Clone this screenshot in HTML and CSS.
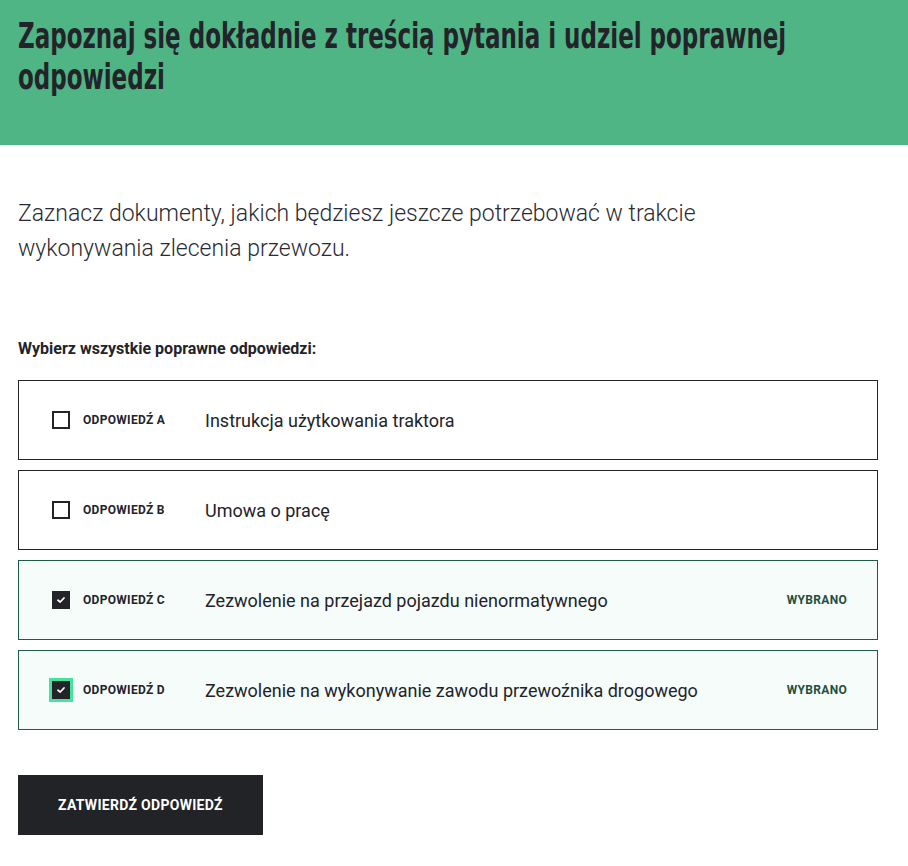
FILE: index.html
```html
<!DOCTYPE html>
<html lang="pl">
<head>
    <meta charset="UTF-8">
    <meta name="viewport" content="width=device-width, initial-scale=1.0">
    <title>Pytanie</title>
    <link rel="stylesheet" href="styles.css">
</head>
<body>
    <header class="question-header">
        <h1>Zapoznaj się dokładnie z treścią pytania i udziel poprawnej odpowiedzi</h1>
    </header>

    <main class="question-body">
        <p class="question-text">Zaznacz dokumenty, jakich będziesz jeszcze potrzebować w trakcie wykonywania zlecenia przewozu.</p>

        <div class="answers-label">Wybierz wszystkie poprawne odpowiedzi:</div>

        <div class="answers">
            <label class="answer">
                <span class="checkbox"></span>
                <span class="answer-key">Odpowiedź A</span>
                <span class="answer-text">Instrukcja użytkowania traktora</span>
            </label>
            <label class="answer">
                <span class="checkbox"></span>
                <span class="answer-key">Odpowiedź B</span>
                <span class="answer-text">Umowa o pracę</span>
            </label>
            <label class="answer selected">
                <span class="checkbox">
                    <svg width="10" height="8" viewBox="0 0 10 8"><path d="M2 4.2 L4.2 6 L8 2" fill="none" stroke="#fff" stroke-width="1.8" stroke-linecap="round" stroke-linejoin="round"/></svg>
                </span>
                <span class="answer-key">Odpowiedź C</span>
                <span class="answer-text">Zezwolenie na przejazd pojazdu nienormatywnego</span>
                <span class="answer-status">Wybrano</span>
            </label>
            <label class="answer selected">
                <span class="checkbox focused">
                    <svg width="10" height="8" viewBox="0 0 10 8"><path d="M2 4.2 L4.2 6 L8 2" fill="none" stroke="#fff" stroke-width="1.8" stroke-linecap="round" stroke-linejoin="round"/></svg>
                </span>
                <span class="answer-key">Odpowiedź D</span>
                <span class="answer-text">Zezwolenie na wykonywanie zawodu przewoźnika drogowego</span>
                <span class="answer-status">Wybrano</span>
            </label>
        </div>

        <button class="submit-btn">Zatwierdź odpowiedź</button>
    </main>
</body>
</html>
```

FILE: styles.css
```css
* {
    margin: 0;
    padding: 0;
    box-sizing: border-box;
}

body {
    font-family: Roboto, "Liberation Sans", sans-serif;
    color: #23232a;
    background: #fff;
}

.question-header {
    background: #50b584;
    height: 145px;
    padding: 16px 0 0 18px;
    overflow: hidden;
}

/* no condensed display face offline, so squeeze DejaVu Condensed */
.question-header h1 {
    font-family: "DejaVu Sans Condensed", "DejaVu Sans", sans-serif;
    font-weight: bold;
    font-size: 35px;
    line-height: 41px;
    color: #23232a;
    width: 1170px;
    transform: scaleX(0.73);
    transform-origin: left top;
}

.question-body {
    padding: 51px 30px 40px 18px;
}

.question-text {
    font-weight: 300;
    font-size: 23px;
    line-height: 35px;
    max-width: 720px;
    color: #2a2a32;
}

.answers-label {
    margin-top: 73px;
    font-weight: bold;
    font-size: 16px;
    line-height: 20px;
    margin-bottom: 21px;
}

.answers {
    display: flex;
    flex-direction: column;
    gap: 10px;
}

.answer {
    display: flex;
    align-items: center;
    height: 80px;
    padding: 0 30px 0 33px;
    border: 1px solid #23232a;
    cursor: pointer;
}

.answer.selected {
    border-color: #1f5c47;
    background: #f5fcf9;
}

.checkbox {
    width: 18px;
    height: 18px;
    border: 2px solid #23232a;
    display: flex;
    align-items: center;
    justify-content: center;
    flex-shrink: 0;
}

.selected .checkbox {
    background: #23232a;
}

.checkbox.focused {
    outline: 3px solid #45e39e;
}

.answer-key {
    width: 122px;
    margin-left: 13px;
    font-weight: bold;
    font-size: 12px;
    letter-spacing: 0.3px;
    text-transform: uppercase;
    flex-shrink: 0;
}

.answer-text {
    flex: 1;
    font-size: 18px;
}

.answer-status {
    font-weight: bold;
    font-size: 12px;
    letter-spacing: 0.3px;
    text-transform: uppercase;
    color: #1f4f3e;
}

.submit-btn {
    margin-top: 45px;
    height: 60px;
    padding: 0 40px;
    background: #222327;
    color: #fff;
    border: none;
    font-family: Roboto, "Liberation Sans", sans-serif;
    font-weight: bold;
    font-size: 14px;
    letter-spacing: 0.3px;
    text-transform: uppercase;
    cursor: pointer;
}
```
